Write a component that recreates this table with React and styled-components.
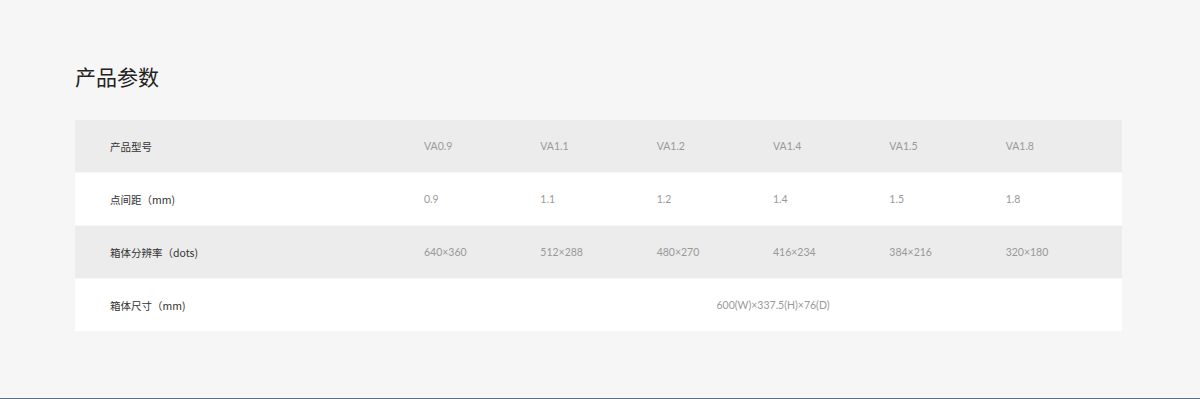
import React from 'react'
import styled, { createGlobalStyle } from 'styled-components'

const GlobalStyle = createGlobalStyle`
  html, body {
    margin: 0;
    padding: 0;
    background: #f6f6f6;
  }
  body {
    font-family: Lato, 'Noto Sans CJK SC', sans-serif;
  }
`

const models = ['VA0.9', 'VA1.1', 'VA1.2', 'VA1.4', 'VA1.5', 'VA1.8']

const rows = [
  { label: '产品型号', values: models },
  { label: '点间距（mm)', values: ['0.9', '1.1', '1.2', '1.4', '1.5', '1.8'] },
  {
    label: '箱体分辨率（dots)',
    values: ['640×360', '512×288', '480×270', '416×234', '384×216', '320×180'],
  },
  { label: '箱体尺寸（mm)', span: '600(W)×337.5(H)×76(D)' },
]

export default function App() {
  return (
    <>
      <GlobalStyle />
      <Page>
        <Section>
          <Title>产品参数</Title>
          <Table>
            {rows.map((row, i) => (
              <Row key={i} $shaded={i % 2 === 0}>
                <Label>{row.label}</Label>
                {row.span ? (
                  <Spanned>{row.span}</Spanned>
                ) : (
                  row.values.map((v, j) => <Value key={j}>{v}</Value>)
                )}
              </Row>
            ))}
          </Table>
        </Section>
      </Page>
    </>
  )
}

const Page = styled.div`
  height: 399px;
  box-sizing: border-box;
  border-bottom: 1px solid #5d7186;
`

const Section = styled.div`
  padding: 63px 78px 0 75px;
`

const Title = styled.h2`
  margin: 0 0 30px;
  font-family: 'Noto Sans CJK SC', sans-serif;
  font-weight: 400;
  font-size: 21px;
  line-height: 27px;
  color: #222;
`

const Table = styled.div`
  display: flex;
  flex-direction: column;
  gap: 1px;
`

const Row = styled.div`
  display: grid;
  grid-template-columns: 349px repeat(6, 1fr);
  align-items: center;
  height: 52px;
  background: ${(p) => (p.$shaded ? '#ececec' : '#ffffff')};
`

const Label = styled.div`
  padding-left: 35px;
  font-family: 'Noto Sans CJK SC', sans-serif;
  font-size: 10.5px;
  color: #333;
`

const Value = styled.div`
  font-family: Lato, sans-serif;
  font-size: 10.5px;
  color: #999;
`

const Spanned = styled(Value)`
  grid-column: 2 / 8;
  text-align: center;
`
